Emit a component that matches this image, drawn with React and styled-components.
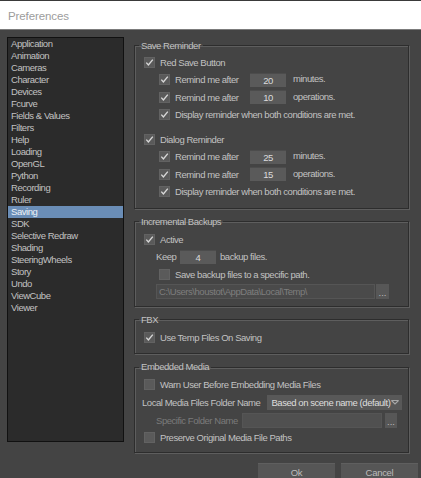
import React from "react";
import styled, { createGlobalStyle } from "styled-components";

const GlobalStyle = createGlobalStyle`
  html, body { margin: 0; padding: 0; background: #444; }
  body { font-family: "Liberation Sans", Arial, sans-serif; }
  * { box-sizing: border-box; }
`;

const Window = styled.div`
  width: 421px;
  height: 478px;
  background: #444444;
  display: flex;
  flex-direction: column;
  overflow: hidden;
  color: #c2c2c2;
  font-size: 9.5px;
  letter-spacing: -0.45px;
`;

const TitleBar = styled.div`
  height: 30px;
  flex: none;
  background: #ffffff;
  border-top: 1px solid #3a3a3a;
  border-bottom: 1px solid #7c7c7c;
  display: flex;
  align-items: center;
  padding-left: 8px;
  padding-top: 1px;
  font-size: 11.5px;
  letter-spacing: -0.1px;
  color: #9c9c9c;
`;

const Main = styled.div`
  height: 433px;
  flex: none;
  display: flex;
  gap: 10px;
  padding: 7px 12px 0 7px;
  align-items: flex-start;
`;

const List = styled.ul`
  list-style: none;
  margin: 0;
  padding: 0;
  width: 117px;
  height: 405px;
  flex: none;
  background: #2b2b2b;
  border: 1px solid #111;
`;

const Item = styled.li`
  height: 12px;
  line-height: 12px;
  padding-left: 3px;
  color: ${(p) => (p.$active ? "#eef3f8" : "#c2c2c2")};
  background: ${(p) => (p.$active ? "#6a8db6" : "transparent")};
`;

const Column = styled.div`
  width: 275px;
  display: flex;
  flex-direction: column;
  gap: 6px;
  padding-top: 1.5px;
`;

const Group = styled.fieldset`
  margin: 0;
  min-width: 0;
  padding: ${(p) => p.$pt ?? 2}px 10px ${(p) => p.$pb ?? 6}px 9px;
  border: 1px solid #2d2d2d;
  box-shadow: 1px 1px 0 #5e5e5e, inset 1px 1px 0 #5e5e5e;
`;

const Legend = styled.legend`
  padding: 0 2px;
  margin-left: -5px;
  line-height: 14px;
  color: #c2c2c2;
`;

const Row = styled.div`
  height: ${(p) => p.$h ?? 17.5}px;
  display: flex;
  align-items: center;
  padding-left: ${(p) => p.$indent ?? 0}px;
  margin-top: ${(p) => p.$mt ?? 0}px;
  white-space: nowrap;
`;

const Box = styled.span`
  width: 11px;
  height: 11px;
  flex: none;
  background: #5a5a5a;
  border: 1px solid #626262;
  display: inline-flex;
  align-items: center;
  justify-content: center;
  margin-right: 5px;
`;

const Label = styled.span`
  width: ${(p) => (p.$w ? `${p.$w}px` : "auto")};
  flex: none;
  color: ${(p) => (p.$dim ? "#7b7b7b" : "inherit")};
  margin-left: ${(p) => p.$ml ?? 0}px;
`;

const Unit = styled.span`
  margin-left: ${(p) => p.$ml ?? 7}px;
  align-self: flex-start;
  padding-top: 2px;
`;

const NumBox = styled.span`
  width: 36px;
  height: 14px;
  flex: none;
  background: #5a5a5a;
  border-top: 1px solid #4c4c4c;
  color: #dcdcdc;
  display: inline-flex;
  align-items: center;
  justify-content: center;
`;

const PathBox = styled.span`
  width: ${(p) => p.$w}px;
  height: 15px;
  flex: none;
  background: ${(p) => p.$bg ?? "#4a4a4a"};
  border: 1px solid #555;
  color: #7e7e7e;
  display: inline-flex;
  align-items: center;
  padding-left: 2px;
  overflow: hidden;
`;

const Browse = styled.span`
  width: ${(p) => p.$w ?? 13}px;
  height: 15px;
  flex: none;
  margin-left: ${(p) => p.$ml ?? 1}px;
  background: #575757;
  color: #bdbdbd;
  display: inline-flex;
  align-items: flex-end;
  justify-content: center;
  padding-bottom: 3px;
  line-height: 6px;
  letter-spacing: 0;
`;

const Select = styled.span`
  width: 135px;
  height: 15px;
  flex: none;
  margin-left: 7px;
  background: #585858;
  color: #dedede;
  display: inline-flex;
  align-items: center;
  justify-content: space-between;
  padding: 0 3px 0 4px;
`;

const Footer = styled.div`
  display: flex;
  justify-content: flex-end;
  gap: 6px;
  padding-right: 3px;
`;

const Button = styled.button`
  width: 77px;
  height: 22px;
  border: none;
  border-top: 1px solid #5f5f5f;
  background: #565656;
  color: #bcbcbc;
  font-family: inherit;
  font-size: 9.5px;
  letter-spacing: -0.3px;
  padding: 0 0 5px;
`;

const Check = ({ on }) => (
  <Box>
    {on && (
      <svg width="9" height="9" viewBox="0 0 9 9">
        <polyline points="1.3,4.6 3.4,6.9 7.8,1.6" fill="none" stroke="#d8d8d8" strokeWidth="1.4" />
      </svg>
    )}
  </Box>
);

const items = [
  "Application", "Animation", "Cameras", "Character", "Devices", "Fcurve",
  "Fields & Values", "Filters", "Help", "Loading", "OpenGL", "Python",
  "Recording", "Ruler", "Saving", "SDK", "Selective Redraw", "Shading",
  "SteeringWheels", "Story", "Undo", "ViewCube", "Viewer",
];

const ReminderBlock = ({ title, mins, ops, mt }) => (
  <>
    <Row $mt={mt}>
      <Check on />
      <span>{title}</span>
    </Row>
    <Row $indent={15}>
      <Check on />
      <Label $w={75}>Remind me after</Label>
      <NumBox>{mins}</NumBox>
      <Unit>minutes.</Unit>
    </Row>
    <Row $indent={15}>
      <Check on />
      <Label $w={75}>Remind me after</Label>
      <NumBox>{ops}</NumBox>
      <Unit>operations.</Unit>
    </Row>
    <Row $indent={15}>
      <Check on />
      <span>Display reminder when both conditions are met.</span>
    </Row>
  </>
);

export default function App() {
  return (
    <>
      <GlobalStyle />
      <Window>
        <TitleBar>Preferences</TitleBar>
        <Main>
          <List>
            {items.map((t) => (
              <Item key={t} $active={t === "Saving"}>{t}</Item>
            ))}
          </List>
          <Column>
            <Group $pt={1} $pb={7}>
              <Legend>Save Reminder</Legend>
              <ReminderBlock title="Red Save Button" mins="20" ops="10" />
              <ReminderBlock title="Dialog Reminder" mins="25" ops="15" mt={7} />
            </Group>
            <Group $pb={5}>
              <Legend>Incremental Backups</Legend>
              <Row>
                <Check on />
                <span>Active</span>
              </Row>
              <Row $indent={12}>
                <Label $w={24}>Keep</Label>
                <NumBox>4</NumBox>
                <Label $ml={4}>backup files.</Label>
              </Row>
              <Row $indent={15}>
                <Check />
                <span>Save backup files to a specific path.</span>
              </Row>
              <Row $indent={12}>
                <PathBox $w={219}>C:\Users\houstot\AppData\Local\Temp\</PathBox>
                <Browse>...</Browse>
              </Row>
            </Group>
            <Group $pb={7}>
              <Legend>FBX</Legend>
              <Row>
                <Check on />
                <span>Use Temp Files On Saving</span>
              </Row>
            </Group>
            <Group $pb={5}>
              <Legend>Embedded Media</Legend>
              <Row>
                <Check />
                <span>Warn User Before Embedding Media Files</span>
              </Row>
              <Row>
                <Label $ml={-2}>Local Media Files Folder Name</Label>
                <Select>
                  <span>Based on scene name (default)</span>
                  <svg width="8" height="5" viewBox="0 0 8 5">
                    <polyline points="0.5,0.5 4,4 7.5,0.5" fill="none" stroke="#a8a8a8" strokeWidth="1.1" />
                    <line x1="0.5" y1="0.5" x2="7.5" y2="0.5" stroke="#a8a8a8" strokeWidth="1" />
                  </svg>
                </Select>
              </Row>
              <Row $h={18}>
                <Label $w={86} $dim $ml={12}>Specific Folder Name</Label>
                <PathBox $w={140} $bg="#505050" />
                <Browse $w={12} $ml={3}>...</Browse>
              </Row>
              <Row>
                <Check />
                <span>Preserve Original Media File Paths</span>
              </Row>
            </Group>
          </Column>
        </Main>
        <Footer>
          <Button>Ok</Button>
          <Button>Cancel</Button>
        </Footer>
      </Window>
    </>
  );
}
